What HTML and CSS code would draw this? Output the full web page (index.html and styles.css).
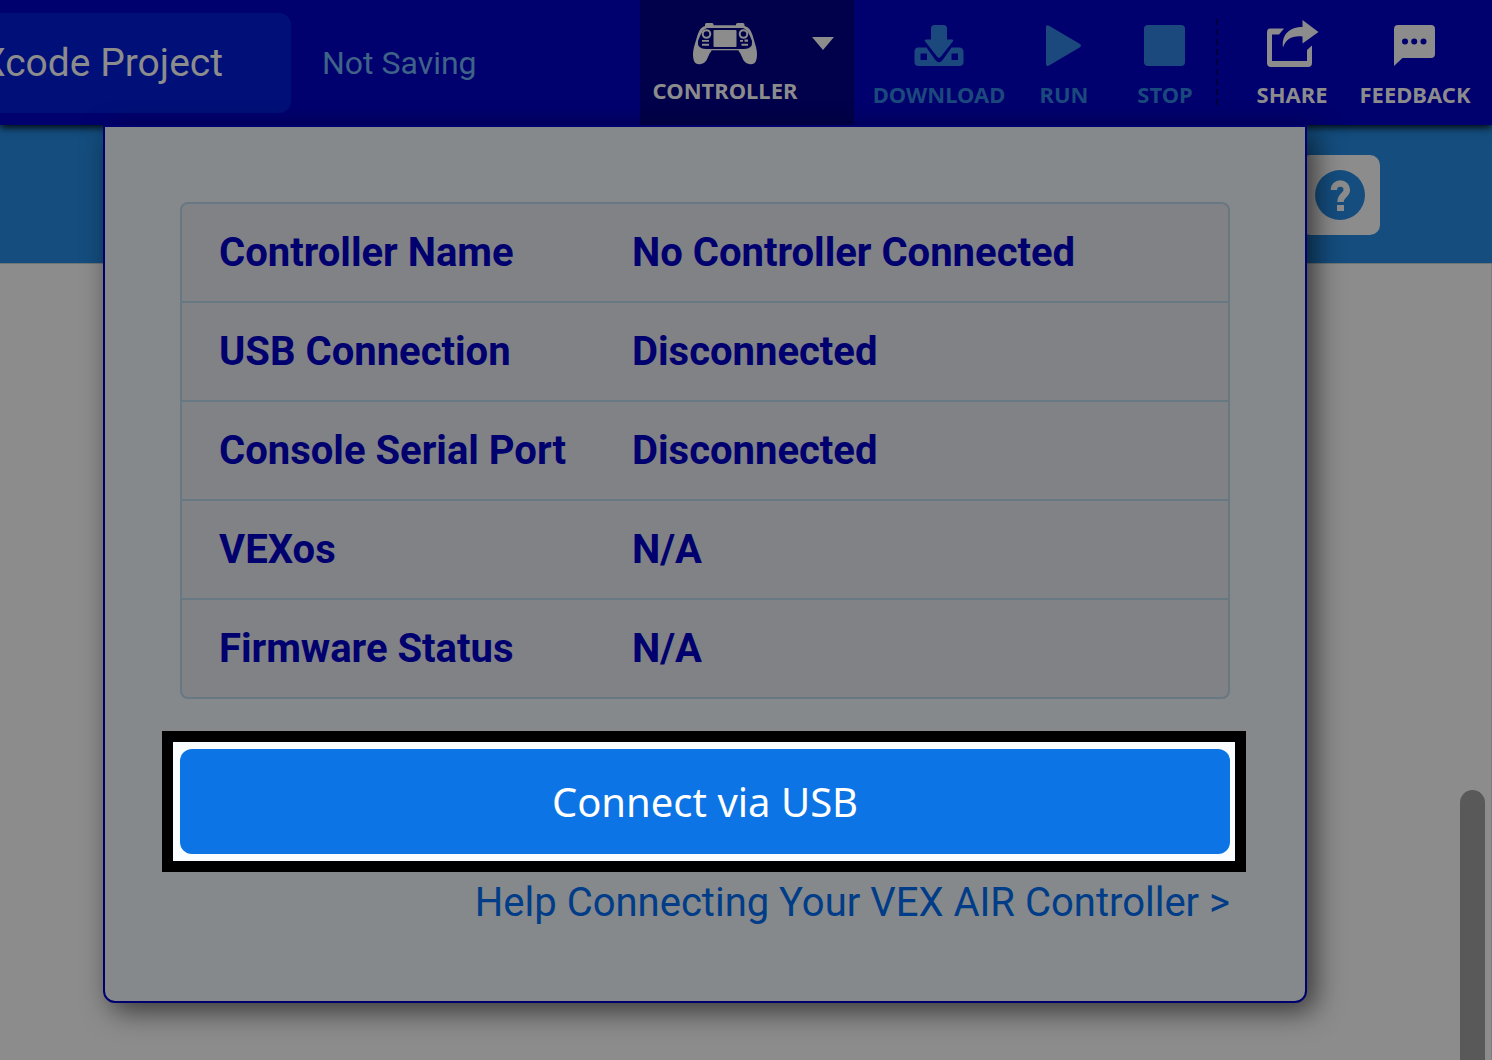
FILE: index.html
```html
<!DOCTYPE html>
<html lang="en">

<head>
    <meta charset="UTF-8">
    <meta name="viewport" content="width=device-width, initial-scale=1.0">
    <title>Xcode Project</title>
    <link rel="stylesheet" href="styles.css">
</head>

<body>
    <header class="toolbar">
        <button class="project-name">Xcode Project</button>
        <span class="save-status">Not Saving</span>

        <button class="controller">
            <span class="controller-main">
                <svg width="64" height="42" viewBox="0 0 64 42" fill="currentColor">
                    <path d="M12 3V1.500Q12 0 13.500 0H19Q20.500 0 20.500 1.500V2.300H43V1.500Q43 0 44.500 0H50Q51.500 0 51.500 1.500V3Q57 4 59.500 12L63 24Q65 32 63 38Q61 42 56 41Q51 40 49 34Q47 29 45 27.500H19Q17 29 15 34Q13 40 8 41Q3 42 1 38Q-1 32 1 24L4.500 12Q7 4 12 3Z"/>
                    <path class="ink" d="M14 5H50Q54 6 57 13L59 18Q60 26 51 26H13Q4 26 5 18L7 13Q10 6 14 5Z"/>
                    <rect x="20.500" y="7" width="23" height="17" rx="1"/>
                    <circle class="ring" cx="13.500" cy="11" r="3.800"/>
                    <circle class="ring" cx="50.500" cy="11" r="3.800"/>
                    <path d="M9 17H16V18.800H9ZM9 20.800H16V22.800H9ZM47 17H50V18.800H47ZM51.500 16.500H55V18.800H51.500ZM48.500 20.800H55V22.800H48.500Z"/>
                    <path class="ink" d="M18 27.300H46V28.500H18Z" opacity=".6"/>
                </svg>
                <span>CONTROLLER</span>
            </span>
            <svg class="caret" width="22" height="13" viewBox="0 0 22 13" fill="currentColor">
                <path d="M0 0H22L11 13Z"/>
            </svg>
        </button>

        <div class="tools">
            <button class="tool download" disabled>
                <svg width="50" height="42" viewBox="0 0 50 42" fill="currentColor">
                    <path d="M20.500 0H29.500Q33 0 33 3.500V14.500H38Q40 14.500 38.800 16.500L27 31.500Q25 34 23 31.500L11.200 16.500Q10 14.500 12 14.500H17V3.500Q17 0 20.500 0Z"/>
                    <path fill-rule="evenodd" d="M4 22.500H12.500L21 34.500Q25 40 29 34.500L37.500 22.500H45Q49.500 22.500 49.500 27V37Q49.500 41 45 41H4.500Q.5 41 .5 37V27Q.5 22.500 4 22.500ZM6.500 28.500V35H13V28.500ZM37.500 28.500V35H44V28.500Z"/>
                </svg>
                <span>DOWNLOAD</span>
            </button>
            <button class="tool run" disabled>
                <svg width="36" height="42" viewBox="0 0 36 42" fill="currentColor">
                    <path d="M0 2Q0 -1 3 .8L34 19Q36 20.500 34 22.200L3 40.500Q0 42 0 39Z"/>
                </svg>
                <span>RUN</span>
            </button>
            <button class="tool stop" disabled>
                <svg width="42" height="42" viewBox="0 0 42 42" fill="currentColor">
                    <rect width="41" height="41" rx="4"/>
                </svg>
                <span>STOP</span>
            </button>
        </div>

        <div class="tools links">
            <button class="tool share">
                <svg width="52" height="42" viewBox="0 0 52 42" fill="currentColor" overflow="visible">
                    <path d="M4 3.500H18L13 9.500H6V36H41V25L46 20.500V38Q46 42 42 42H5Q1 42 1 38V7.500Q1 3.500 4 3.500Z"/>
                    <path d="M36.500 -5L52.500 7L36.500 18.500V11.500C26 10.500 20 14 17 22.500C15.500 9 24 2 36.500 2Z"/>
                </svg>
                <span>SHARE</span>
            </button>
            <button class="tool feedback">
                <svg width="42" height="42" viewBox="0 0 42 42" fill="currentColor">
                    <path fill-rule="evenodd" d="M4 0H37Q41 0 41 4V29Q41 33 37 33H8.500L0 41V4Q0 0 4 0ZM8 16.500A3 3 0 1 0 14 16.500A3 3 0 1 0 8 16.500ZM17.200 16.500A3 3 0 1 0 23.200 16.500A3 3 0 1 0 17.200 16.500ZM26.500 16.500A3 3 0 1 0 32.500 16.500A3 3 0 1 0 26.500 16.500Z"/>
                </svg>
                <span>FEEDBACK</span>
            </button>
        </div>
    </header>

    <div class="tab-strip">
        <button class="help" aria-label="Help">
            <svg width="50" height="50" viewBox="0 0 50 50">
                <circle cx="25" cy="25" r="25" fill="#144d7e"/>
                <path d="M18.800 20A6.500 6.500 0 0 1 31.800 20C31.800 25 25.500 25 25.500 32" fill="none" stroke="#8c8c8c" stroke-width="6.500"/>
                <rect x="22" y="35" width="7" height="6" fill="#8c8c8c"/>
            </svg>
        </button>
    </div>

    <main class="workspace">
        <div class="scroll-thumb"></div>
    </main>

    <section class="panel">
        <table class="info">
            <tr>
                <th scope="row">Controller Name</th>
                <td>No Controller Connected</td>
            </tr>
            <tr>
                <th scope="row">USB Connection</th>
                <td>Disconnected</td>
            </tr>
            <tr>
                <th scope="row">Console Serial Port</th>
                <td>Disconnected</td>
            </tr>
            <tr>
                <th scope="row">VEXos</th>
                <td>N/A</td>
            </tr>
            <tr>
                <th scope="row">Firmware Status</th>
                <td>N/A</td>
            </tr>
        </table>
        <div class="highlight">
            <button class="connect">Connect via USB</button>
        </div>
        <a class="help-link" href="#">Help Connecting Your VEX AIR Controller &gt;</a>
    </section>
</body>

</html>
```

FILE: styles.css
```css
* {
    box-sizing: border-box;
}

body {
    display: flex;
    flex-direction: column;
    position: relative;
    height: 100vh;
    margin: 0;
    overflow: hidden;
    background-color: #8c8c8c;
    color: #8c8c8c;
    font-family: Roboto, sans-serif;
}

button {
    margin: 0;
    padding: 0;
    border: none;
    background: none;
    color: inherit;
    font-family: inherit;
}

svg {
    display: block;
    flex: none;
}

/* top bar */
.toolbar {
    display: flex;
    flex: none;
    position: relative;
    height: 125px;
    padding-right: 5px;
    background-color: #00006e;
    box-shadow: 0 2px 8px #000;
}

.project-name {
    display: flex;
    justify-content: flex-end;
    align-items: center;
    width: 291px;
    height: 100px;
    margin-top: 13px;
    padding-right: 68px;
    border-radius: 0 12px 12px 0;
    background-color: #001078;
    font-size: 39px;
    white-space: nowrap;
}

.save-status {
    margin-left: 31px;
    color: #3f6287;
    font-size: 32px;
    line-height: 126px;
    white-space: nowrap;
}

.controller {
    display: flex;
    width: 214px;
    margin-left: auto;
    padding: 23px 0 0 10px;
    background-color: #00004b;
}

.controller-main {
    display: flex;
    flex-direction: column;
    align-items: center;
    gap: 10px;
    width: 150px;
}

.controller-main,
.tool {
    font-family: "Noto Sans", sans-serif;
    font-size: 22px;
    font-weight: 700;
    line-height: 30px;
}

.caret {
    margin: 14px 0 0 12px;
}

.ink {
    fill: #00004b;
}

.ring {
    fill: none;
    stroke: currentColor;
    stroke-width: 2;
}

.tools {
    display: flex;
}

.tool {
    display: flex;
    flex-direction: column;
    align-items: center;
    gap: 12px;
    padding-top: 25px;
}

.tool:disabled {
    color: #1c497d;
}

.download {
    width: 170px;
}

.run {
    width: 80px;
}

.stop {
    width: 102px;
    margin-left: 10px;
}

.links::before {
    content: "";
    width: 2px;
    height: 88px;
    margin: 19px 23px 0 0;
    background: repeating-linear-gradient(#00003c 0 6px, transparent 6px 10px);
}

.share {
    width: 102px;
}

.feedback {
    width: 144px;
}

/* area behind the panel */
.tab-strip {
    display: flex;
    flex: none;
    justify-content: flex-end;
    height: 139px;
    padding: 30px 112px 0 0;
    border-bottom: 1px solid #6f7477;
    background-color: #144d7e;
}

.help {
    display: flex;
    justify-content: center;
    align-items: center;
    width: 80px;
    height: 80px;
    border-radius: 10px;
    background-color: #8c8c8c;
}

.workspace {
    display: flex;
    flex: 1;
    justify-content: flex-end;
    padding: 526px 6px 0 0;
    border-right: 1px solid #7d7d7d;
}

.scroll-thumb {
    width: 25px;
    border-radius: 13px 13px 0 0;
    background-color: #595959;
}

/* controller panel */
.panel {
    position: absolute;
    top: 125px;
    left: 103px;
    right: 185px;
    padding: 75px 75px 74px;
    border: 2px solid #00006e;
    border-radius: 0 0 12px 12px;
    background-color: #85898b;
    box-shadow: 8px 8px 28px rgba(0, 0, 0, 0.6);
}

.info {
    width: 100%;
    border: 2px solid #687883;
    border-radius: 8px;
    border-spacing: 0;
    background-color: #808286;
    color: #00006e;
    font-size: 40px;
    font-weight: 700;
    line-height: 47px;
    text-align: left;
}

.info th,
.info td {
    padding: 25px 0;
}

.info th {
    width: 450px;
    padding-left: 37px;
}

.info tr + tr th,
.info tr + tr td {
    border-top: 2px solid #687883;
}

.highlight {
    margin: 32px -16px 0 -18px;
    padding: 7px 5px 7px 7px;
    border: 11px solid #000;
    background-color: #fafdff;
}

.connect {
    display: block;
    width: 100%;
    height: 105px;
    border-radius: 12px;
    background-color: #0c74e4;
    color: #fff;
    font-family: "Noto Sans", sans-serif;
    font-size: 40px;
}

.help-link {
    display: block;
    margin-top: 7px;
    color: #003c87;
    font-size: 40px;
    line-height: 48px;
    text-align: right;
    text-decoration: none;
}
```
